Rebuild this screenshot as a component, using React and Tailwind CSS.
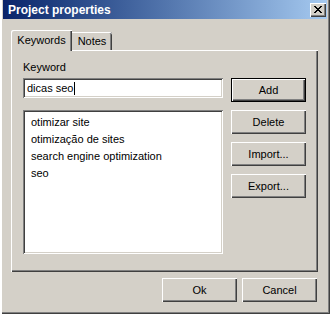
import React from 'react';

const raised =
  'shadow-[inset_1px_1px_#ffffff,inset_-1px_-1px_#404040,inset_-2px_-2px_#808080]';
const sunken =
  'shadow-[inset_1px_1px_#808080,inset_-1px_-1px_#ffffff,inset_2px_2px_#404040,inset_-2px_-2px_#d4d0c8]';

const Button = ({ children, isDefault }) => (
  <div
    className={`flex h-[24px] w-[75px] items-center justify-center bg-[#d4d0c8] text-[11px] text-black ${
      isDefault
        ? 'shadow-[inset_0_0_0_1px_#000000,inset_2px_2px_#ffffff,inset_-2px_-2px_#404040,inset_-3px_-3px_#808080]'
        : raised
    }`}
  >
    {children}
  </div>
);

const keywords = [
  'otimizar site',
  'otimização de sites',
  'search engine optimization',
  'seo',
];

export default function App() {
  return (
    <div
      className="flex h-[314px] w-[330px] flex-col bg-[#d4d0c8] px-[3px] shadow-[inset_2px_0_#ffffff,inset_-1px_-1px_#404040,inset_-2px_-2px_#808080]"
      style={{ fontFamily: '"Liberation Sans", Arial, sans-serif' }}
    >
      {/* Title bar */}
      <div className="flex h-[19px] items-center justify-between bg-linear-to-r from-[#0a246a] to-[#a6caf0] pl-[5px] pr-[1px]">
        <span className="text-[12px] font-bold leading-none text-white">Project properties</span>
        <div className={`flex h-[14px] w-[16px] items-center justify-center bg-[#d4d0c8] ${raised}`}>
          <svg width="8" height="7" viewBox="0 0 8 7" shapeRendering="crispEdges">
            <path d="M0 0h2v1h-2zM6 0h2v1h-2zM1 1h2v1h-2zM5 1h2v1h-2zM2 2h4v1h-4zM3 3h2v1h-2zM2 4h4v1h-4zM1 5h2v1h-2zM5 5h2v1h-2zM0 6h2v1h-2zM6 6h2v1h-2z" fill="#000" />
          </svg>
        </div>
      </div>

      {/* Tabs */}
      <div className="ml-[8px] mt-[11px] flex h-[20px] items-end">
        <div className="relative z-10 -mb-[1px] flex h-[21px] w-[61px] items-start justify-center rounded-tl-[2px] bg-[#d4d0c8] pt-[4px] text-[11px] leading-[13px] text-black shadow-[inset_1px_1px_#ffffff,inset_-1px_0_#404040,inset_-2px_0_#808080]">
          Keywords
        </div>
        <div className="flex h-[18px] w-[40px] items-start justify-center rounded-tr-[2px] bg-[#d4d0c8] pt-[3px] text-[11px] leading-[13px] text-black shadow-[inset_0_1px_#ffffff,inset_-1px_0_#404040,inset_-2px_0_#808080]">
          Notes
        </div>
      </div>

      {/* Tab panel */}
      <div className="ml-[8px] flex h-[222px] w-[307px] shadow-[inset_1px_1px_#ffffff,inset_-1px_-1px_#404040,inset_-2px_-2px_#808080]">
        <div className="ml-[12px] flex w-[200px] flex-col pt-[11px]">
          <div className="h-[13px] text-[11px] leading-[13px] text-black">Keyword</div>
          <div className={`mt-[4px] flex h-[20px] items-center bg-white pl-[4px] text-[11px] text-black ${sunken}`}>
            <span>dicas seo</span>
            <span className="ml-[1px] h-[13px] w-[1px] bg-black" />
          </div>
          <div className={`mt-[12px] flex h-[144px] flex-col bg-white pl-[8px] pt-[4px] ${sunken}`}>
            {keywords.map((k) => (
              <div key={k} className="h-[17px] text-[11px] leading-[17px] text-black">
                {k}
              </div>
            ))}
          </div>
        </div>
        <div className="ml-[8px] flex flex-col gap-[8px] pt-[28px]">
          <Button isDefault>Add</Button>
          <Button>Delete</Button>
          <Button>Import...</Button>
          <Button>Export...</Button>
        </div>
      </div>

      {/* Dialog buttons */}
      <div className="mt-[6px] flex justify-end gap-[5px] pr-[10px]">
        <Button>Ok</Button>
        <Button>Cancel</Button>
      </div>
    </div>
  );
}
